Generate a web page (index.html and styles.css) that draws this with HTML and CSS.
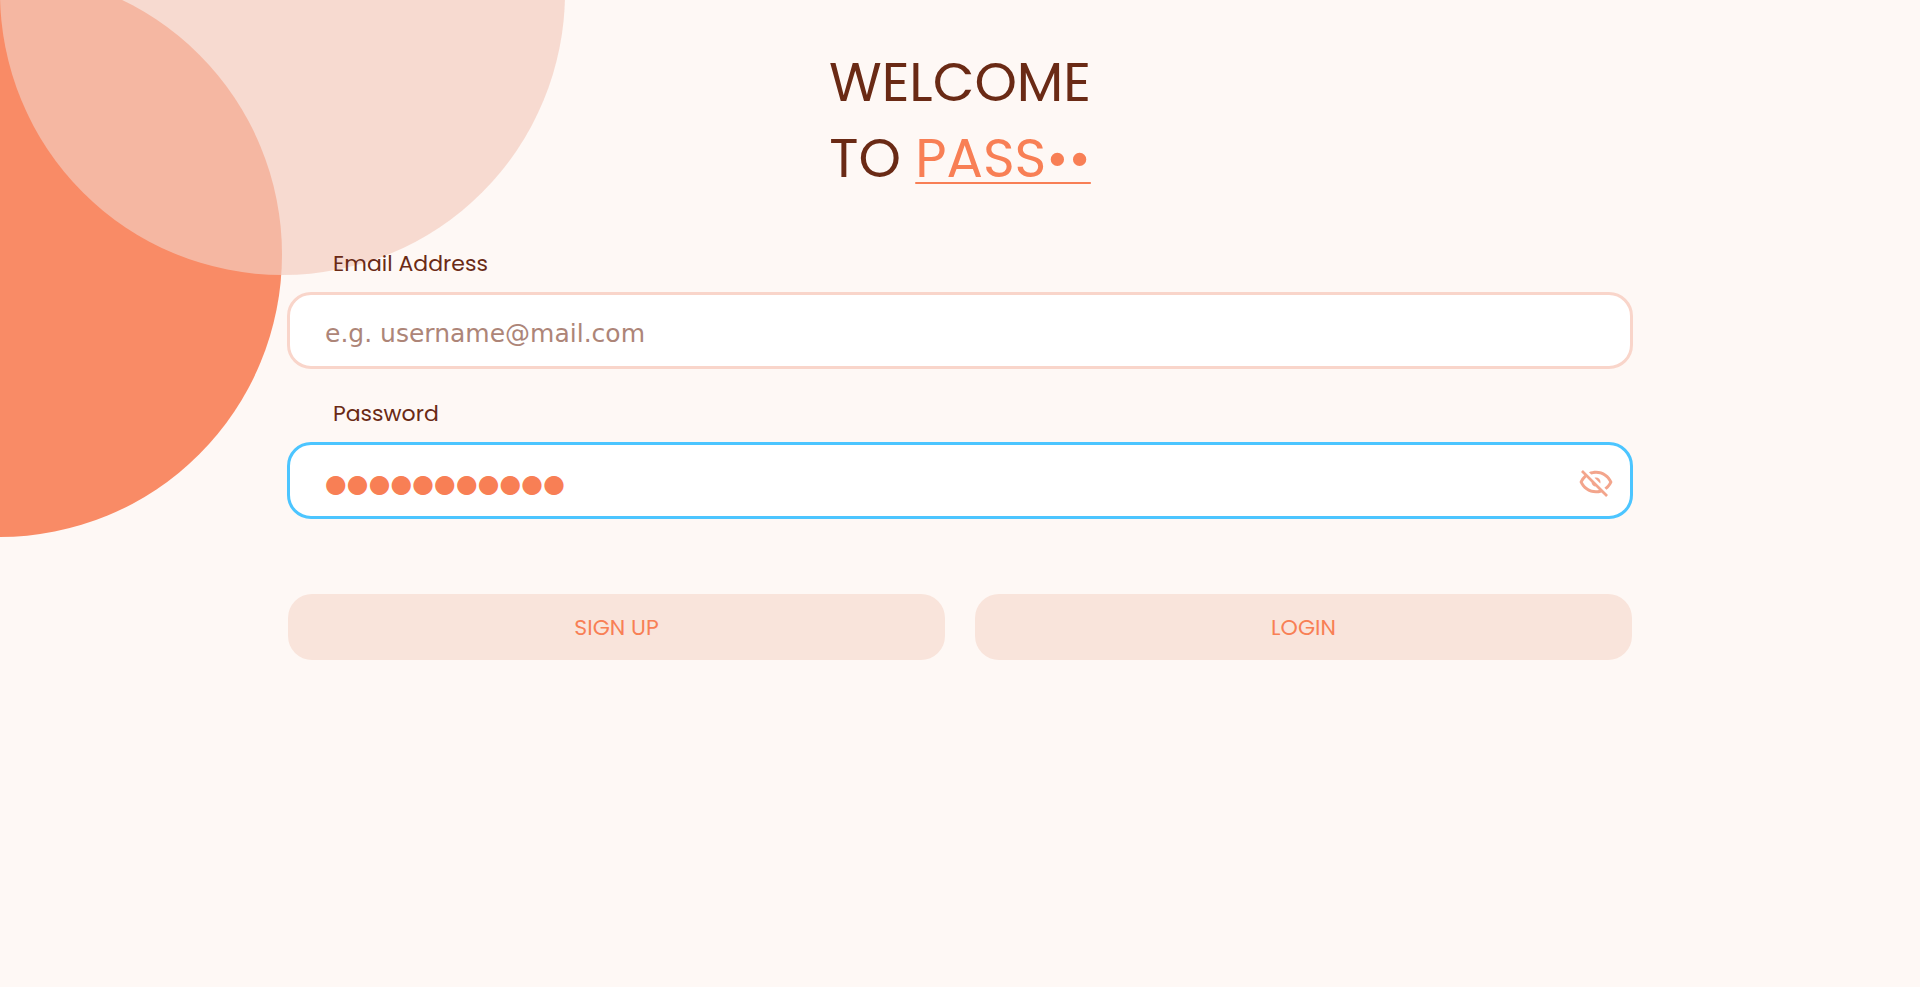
FILE: index.html
```html
<!DOCTYPE html>
<html lang="en">
<head>
<meta charset="utf-8">
<meta name="viewport" content="width=device-width, initial-scale=1">
<title>Welcome to Pass</title>
<link rel="stylesheet" href="styles.css">
</head>
<body>
<div class="circle circle-solid" aria-hidden="true"></div>
<div class="circle circle-soft" aria-hidden="true"></div>
<main class="login">
  <h1 class="title">WELCOME<br>TO <span class="brand">PASS••</span></h1>
  <form class="form">
    <div class="field">
      <label class="label" for="email">Email Address</label>
      <input class="input" id="email" type="text" placeholder="e.g. username@mail.com">
    </div>
    <div class="field">
      <label class="label" for="password">Password</label>
      <div class="secret">
        <input class="input input-active" id="password" type="text" autocomplete="off" value="●●●●●●●●●●●">
        <button class="reveal" type="button" aria-label="Show password">
          <svg class="reveal-icon" viewBox="0 0 24 24"><path d="M2,5.27L3.28,4L20,20.72L18.73,22L15.65,18.92C14.5,19.3 13.28,19.5 12,19.5C7,19.5 2.73,16.39 1,12C1.69,10.24 2.79,8.69 4.19,7.46L2,5.27M12,9A3,3 0 0,1 15,12C15,12.35 14.94,12.69 14.83,13L11,9.17C11.31,9.06 11.65,9 12,9M12,4.5C17,4.5 21.27,7.61 23,12C22.18,14.08 20.79,15.88 19,17.19L17.58,15.76C18.94,14.82 20.06,13.54 20.82,12C19.17,8.64 15.76,6.5 12,6.5C10.91,6.5 9.84,6.68 8.84,7L7.3,5.47C8.74,4.85 10.33,4.5 12,4.5M3.18,12C4.83,15.36 8.24,17.5 12,17.5C12.69,17.5 13.37,17.43 14,17.29L11.72,15C10.29,14.85 9.15,13.71 9,12.28L5.6,8.87C4.61,9.72 3.78,10.78 3.18,12Z"/></svg>
        </button>
      </div>
    </div>
    <div class="actions">
      <button class="button" type="button">SIGN UP</button>
      <button class="button" type="button">LOGIN</button>
    </div>
  </form>
</main>
</body>
</html>
```
FILE: styles.css
```css
* { box-sizing: border-box; }

body {
  margin: 0;
  min-height: 100vh;
  overflow-x: hidden;
  background: #fef8f5;
  color: #6a2a15;
  font-family: Poppins, Inter, sans-serif;
}

/* Decorative circles behind the form */
.circle {
  position: absolute;
  width: 565px;
  height: 565px;
  border-radius: 50%;
}

.circle-solid {
  top: -28px;
  left: -283px;
  background: #f98b66;
  clip-path: inset(0 0 0 283px);
}

.circle-soft {
  top: -290px;
  left: 0;
  background: rgba(243, 204, 190, 0.68);
}

.login {
  position: relative;
  width: 70%;
  margin: 0 auto;
  padding-top: 44px;
}

.title {
  margin: 0;
  font-size: 54px;
  font-weight: 400;
  line-height: 76px;
  text-align: center;
}

.brand {
  color: #f87f55;
  text-decoration: underline;
  text-decoration-thickness: 2px;
  text-underline-offset: 5px;
}

.form { padding-top: 52px; }

.field {
  display: flex;
  flex-direction: column;
  margin: 0 -1px 29px;
}

.label {
  align-self: flex-start;
  padding-left: 46px;
  font-size: 22px;
  line-height: 32px;
  margin-bottom: 12px;
}

.input {
  display: block;
  width: 100%;
  height: 77px;
  padding: 6px 35px 0;
  border: 3px solid #f9d5ca;
  border-radius: 24px;
  outline: none;
  background: #fff;
  color: #f87f55;
  font-family: "DejaVu Sans", sans-serif;
  font-size: 25px;
}

.input::placeholder {
  color: #ad8578;
  opacity: 1;
}

.input-active {
  padding-right: 64px;
  border-color: #4cc5ff;
}

.secret { position: relative; }

.reveal {
  position: absolute;
  top: 22px;
  right: 19px;
  width: 36px;
  height: 36px;
  padding: 0;
  border: 0;
  background: none;
}

.reveal-icon {
  display: block;
  width: 100%;
  height: 100%;
  fill: #f3a58c;
}

.actions {
  display: grid;
  grid-template-columns: 1fr 1fr;
  gap: 30px;
  padding-top: 46px;
}

.button {
  height: 66px;
  border: 0;
  border-radius: 24px;
  background: #f9e4db;
  color: #f87f55;
  font-family: inherit;
  font-size: 22px;
}
```
